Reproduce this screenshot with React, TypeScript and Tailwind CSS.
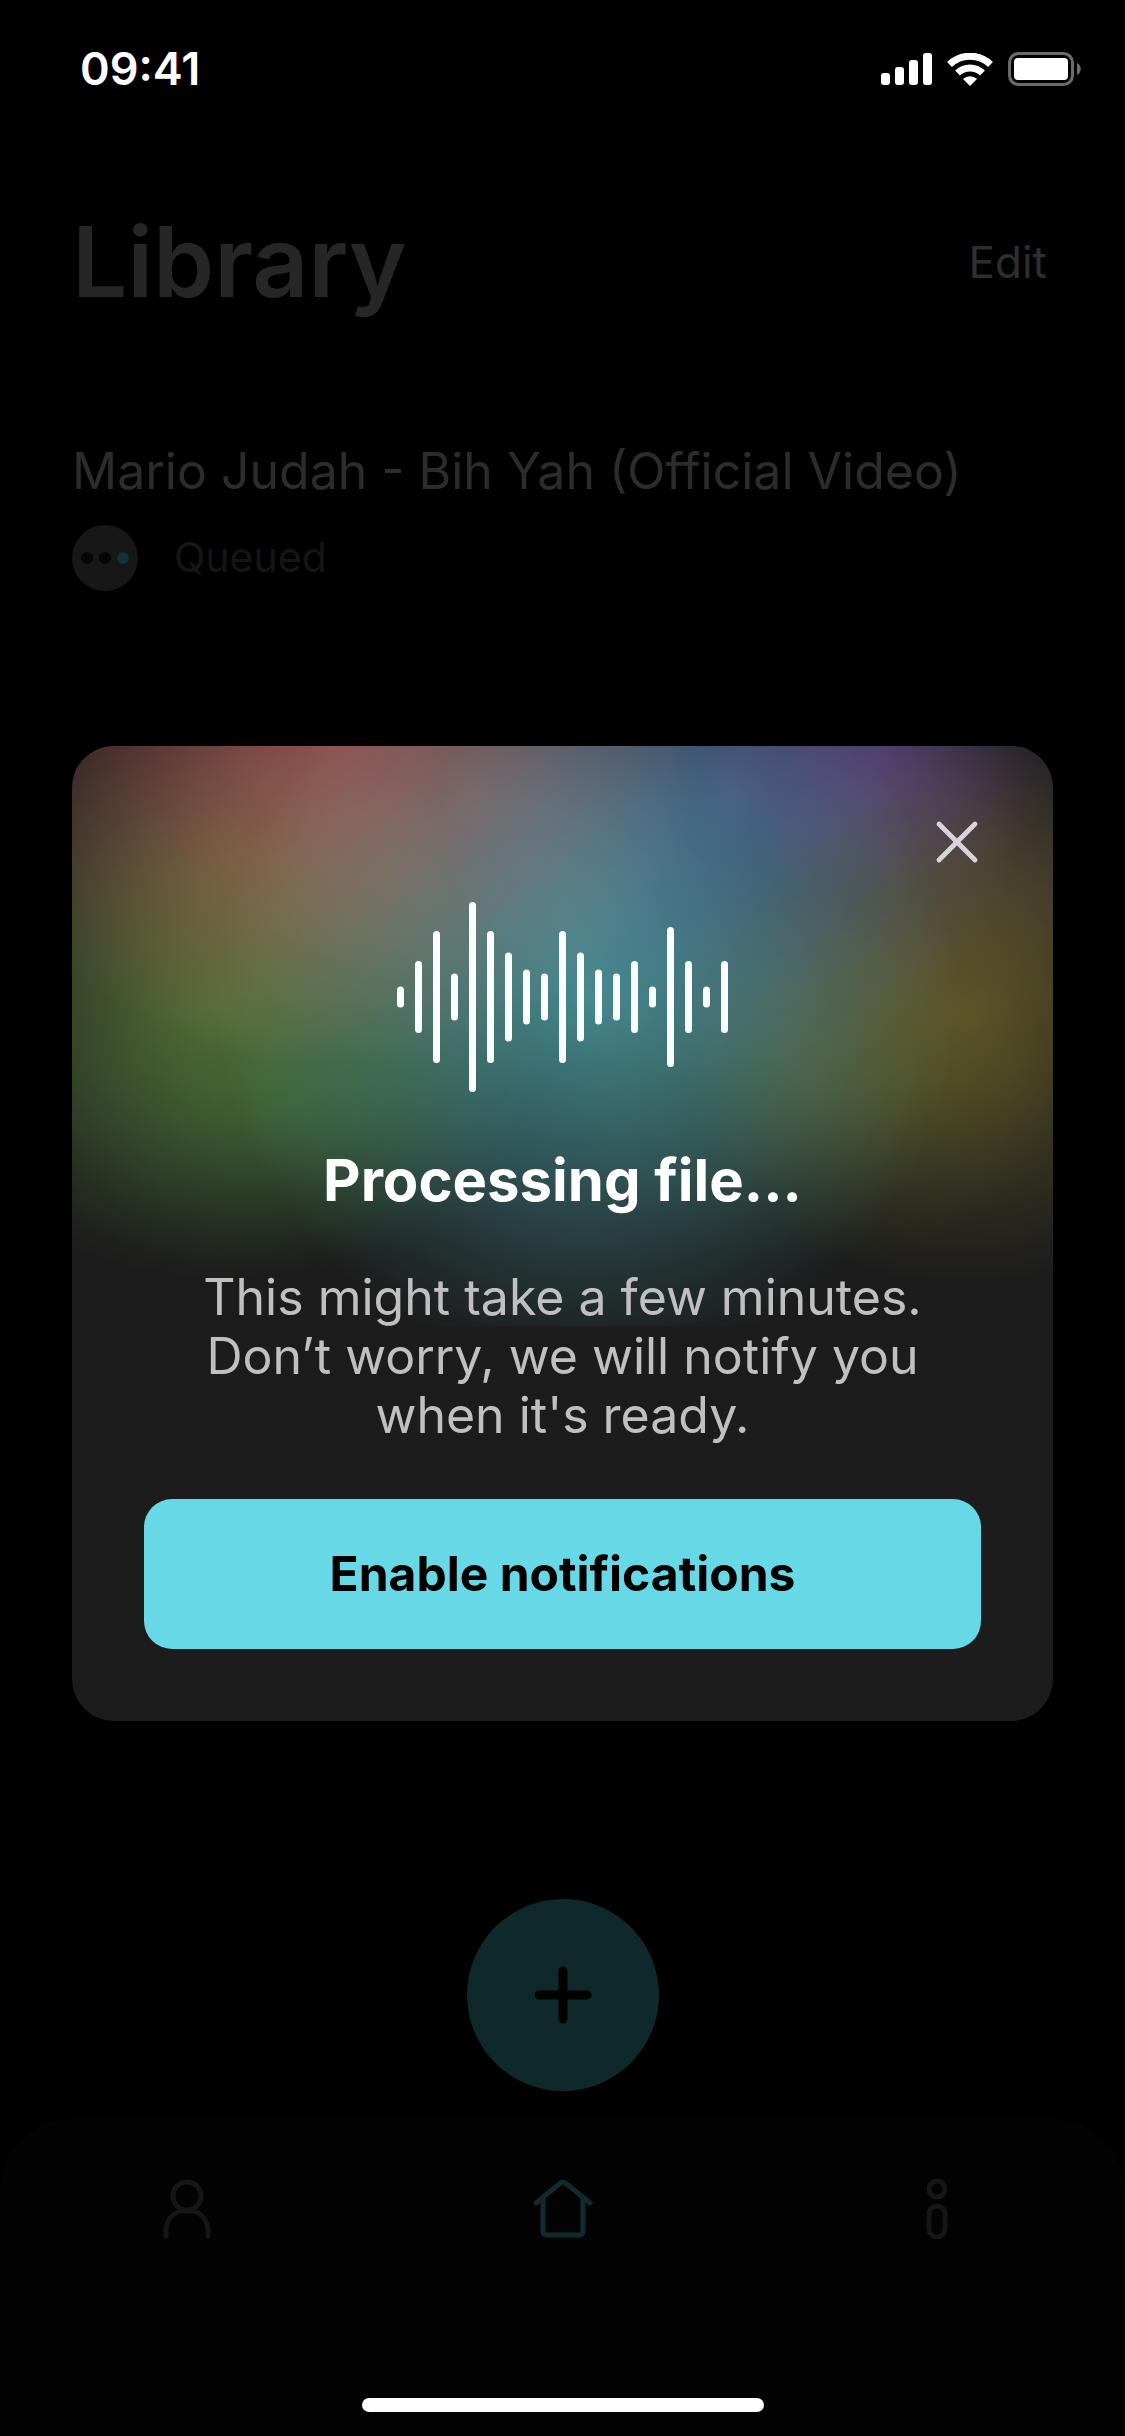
import { X } from "lucide-react";

const waveBars = [21, 72, 132, 47, 190, 132, 89, 55, 47, 132, 89, 55, 47, 72, 21, 140, 72, 21, 72];

const glows = [
  { id: "red", cx: 260, cy: 0, rx: 370, ry: 320, color: "#74302e" },
  { id: "amber", cx: 150, cy: 120, rx: 240, ry: 200, color: "#20120a" },
  { id: "mist", cx: 400, cy: 60, rx: 300, ry: 280, color: "#1c1a18" },
  { id: "green", cx: 145, cy: 262, rx: 330, ry: 270, color: "#34501a" },
  { id: "moss", cx: 210, cy: 370, rx: 260, ry: 160, color: "#06200a" },
  { id: "teal", cx: 515, cy: 250, rx: 370, ry: 370, color: "#2a747a" },
  { id: "blue", cx: 660, cy: 50, rx: 290, ry: 290, color: "#1c2c54" },
  { id: "violet", cx: 800, cy: 10, rx: 190, ry: 140, color: "#2c123c" },
  { id: "taupe", cx: 900, cy: 110, rx: 220, ry: 180, color: "#1a1412" },
  { id: "olive", cx: 740, cy: 340, rx: 240, ry: 180, color: "#0e1a08" },
  { id: "gold", cx: 890, cy: 270, rx: 290, ry: 270, color: "#443a0a" },
];

const StatusBar = () => (
  <div className="relative z-20 flex h-[138px] items-center justify-between pr-11 pl-20 text-white">
    <span className="text-[45px] font-semibold">09:41</span>
    <div className="flex items-center gap-[15px]">
      <svg width="51" height="32" viewBox="0 0 51 32" fill="currentColor">
        <rect x="0" y="20" width="9" height="12" rx="3" />
        <rect x="14" y="14" width="9" height="18" rx="3" />
        <rect x="28" y="7" width="9" height="25" rx="3" />
        <rect x="42" y="0" width="9" height="32" rx="3" />
      </svg>
      <svg width="46" height="33" viewBox="0 0 46 33" fill="none" stroke="currentColor">
        <path d="M2.500 11.500a29.500 29.500 0 0 1 41 0" strokeWidth="7" />
        <path d="M10.500 20a18 18 0 0 1 25 0" strokeWidth="7" />
        <path d="M23 33l-7-7a10 10 0 0 1 14 0z" fill="currentColor" stroke="none" />
      </svg>
      <svg width="73" height="34" viewBox="0 0 73 34" fill="none">
        <rect x="1.500" y="1.500" width="63" height="31" rx="9" stroke="#6b6b6b" strokeWidth="3" />
        <rect x="6" y="6" width="54" height="22" rx="4" fill="currentColor" />
        <path d="M69 11c5 2 5 10 0 12z" fill="#6b6b6b" />
      </svg>
    </div>
  </div>
);

const LibraryHeader = () => (
  <header className="flex items-center justify-between px-[72px] pt-16 pb-14">
    <h1 className="text-[98px] leading-[120px] font-semibold text-[#262626]">Library</h1>
    <button className="px-1.5 text-[44px] text-[#2e2e2e]">Edit</button>
  </header>
);

const QueueItem = () => (
  <li className="mx-[72px] border-b-2 border-[#010101] pt-14 pb-8">
    <p className="text-[50px] leading-[75px] text-[#2c2c2c]">Mario Judah - Bih Yah (Official Video)</p>
    <div className="mt-4 flex items-center gap-9">
      <span className="flex size-[66px] items-center justify-center gap-1.5 rounded-full bg-[#171717]">
        <span className="size-3 rounded-full bg-[#060606]" />
        <span className="size-3 rounded-full bg-[#060606]" />
        <span className="size-3 rounded-full bg-[#103437]" />
      </span>
      <span className="text-[41px] text-[#151515]">Queued</span>
    </div>
  </li>
);

const NavBar = () => (
  <nav className="mt-7 grid h-[317px] grid-cols-3 items-start justify-items-center rounded-t-[72px] bg-[#030303] pt-[60px]">
    <a href="#profile" aria-label="Profile">
      <svg width="60" height="60" viewBox="0 0 60 60" fill="none" stroke="#161616" strokeWidth="5" strokeLinecap="round">
        <circle cx="29" cy="17" r="14" />
        <path d="M8 57v-6a21 20 0 0 1 14-19h14a21 20 0 0 1 14 19v6" />
      </svg>
    </a>
    <a href="#home" aria-label="Home">
      <svg width="60" height="60" viewBox="0 0 60 60" fill="none" stroke="#122a2c" strokeWidth="5" strokeLinecap="round" strokeLinejoin="round">
        <path d="M3 24 27.500 4q2.500-2 5 0L57 24" />
        <path d="M10 19v33q0 4 4 4h32q4 0 4-4V19" />
      </svg>
    </a>
    <a href="#info" aria-label="Info">
      <svg width="60" height="60" viewBox="0 0 60 60" fill="none" stroke="#161616" strokeWidth="5">
        <circle cx="29" cy="10" r="8" />
        <rect x="21" y="27" width="16" height="31" rx="8" />
      </svg>
    </a>
  </nav>
);

const Aurora = () => (
  <svg
    className="absolute inset-x-0 top-0 h-[580px] w-full"
    viewBox="0 0 981 580"
    preserveAspectRatio="none"
    aria-hidden="true"
  >
    <defs>
      {glows.map((glow) => (
        <radialGradient key={glow.id} id={glow.id}>
          <stop offset="0" stopColor={glow.color} />
          <stop offset="0.25" stopColor={glow.color} stopOpacity="0.78" />
          <stop offset="0.75" stopColor={glow.color} stopOpacity="0.22" />
          <stop offset="1" stopColor={glow.color} stopOpacity="0" />
        </radialGradient>
      ))}
    </defs>
    <rect width="981" height="580" fill="#1c1c1c" />
    {glows.map((glow) => (
      <ellipse
        key={glow.id}
        className="mix-blend-screen"
        cx={glow.cx}
        cy={glow.cy}
        rx={glow.rx}
        ry={glow.ry}
        fill={`url(#${glow.id})`}
      />
    ))}
  </svg>
);

const Waveform = () => (
  <svg width="331" height="190" viewBox="0 0 331 190" fill="#fafefe" aria-hidden="true">
    {waveBars.map((height, i) => (
      <rect key={i} x={i * 18} y={95 - height / 2} width="7" height={height} rx="3.500" />
    ))}
  </svg>
);

const ProcessingDialog = () => (
  <div className="absolute inset-0 z-10 flex items-center px-[72px] pt-[30px]">
    <section
      role="dialog"
      aria-labelledby="dialog-title"
      className="relative w-full overflow-hidden rounded-[42px] bg-[#1c1c1c] px-[72px] pb-[72px]"
    >
      <Aurora />
      <button aria-label="Close" className="absolute top-[60px] right-[60px] z-10 text-[#d8d4dc]">
        <X size={72} strokeWidth={1.6} />
      </button>
      <div className="relative flex flex-col items-center pt-[156px] text-center">
        <Waveform />
        <h2 id="dialog-title" className="mt-[52px] text-[58px] leading-[72px] font-bold text-white">
          Processing file...
        </h2>
        <p className="mt-[52px] text-[50px] leading-[59px] text-[#c0c0c0]">
          This might take a few minutes.
          <br />
          Don’t worry, we will notify you
          <br />
          when it's ready.
        </p>
        <button className="mt-[54px] h-[150px] w-full rounded-[28px] bg-[#66d8e6] text-[48px] font-bold text-black">
          Enable notifications
        </button>
      </div>
    </section>
  </div>
);

const App = () => {
  return (
    <div className="relative flex min-h-screen flex-col bg-black font-['Inter','Liberation_Sans',sans-serif]">
      <StatusBar />
      <LibraryHeader />
      <ul className="grow">
        <QueueItem />
      </ul>
      <button
        aria-label="Add file"
        className="flex size-[192px] items-center justify-center self-center rounded-full bg-[#0f292b] text-black"
      >
        <svg width="58" height="58" viewBox="0 0 58 58" stroke="currentColor" strokeWidth="9" strokeLinecap="round">
          <path d="M29 5v48M5 29h48" />
        </svg>
      </button>
      <NavBar />
      <ProcessingDialog />
      <div className="absolute inset-x-0 bottom-6 z-20 mx-auto h-3.5 w-[402px] rounded-full bg-white" />
    </div>
  );
};

export default App;
